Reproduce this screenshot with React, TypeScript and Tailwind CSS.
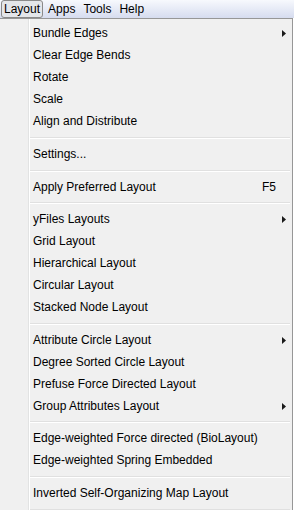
import React from "react";

type Item = { label: string; sub?: boolean; shortcut?: string } | { sep: "a" | "b" };

const items: Item[] = [
  { label: "Bundle Edges", sub: true },
  { label: "Clear Edge Bends" },
  { label: "Rotate" },
  { label: "Scale" },
  { label: "Align and Distribute" },
  { sep: "b" },
  { label: "Settings..." },
  { sep: "b" },
  { label: "Apply Preferred Layout", shortcut: "F5" },
  { sep: "a" },
  { label: "yFiles Layouts", sub: true },
  { label: "Grid Layout" },
  { label: "Hierarchical Layout" },
  { label: "Circular Layout" },
  { label: "Stacked Node Layout" },
  { sep: "b" },
  { label: "Attribute Circle Layout", sub: true },
  { label: "Degree Sorted Circle Layout" },
  { label: "Prefuse Force Directed Layout" },
  { label: "Group Attributes Layout", sub: true },
  { sep: "a" },
  { label: "Edge-weighted Force directed (BioLayout)" },
  { label: "Edge-weighted Spring Embedded" },
  { sep: "b" },
  { label: "Inverted Self-Organizing Map Layout" },
  { sep: "b" },
];

function Arrow() {
  return (
    <svg width="4" height="7" viewBox="0 0 4 7" className="block">
      <path d="M0 0 L4 3.5 L0 7 Z" fill="#1a1a1a" />
    </svg>
  );
}

export default function App() {
  return (
    <div
      className="w-[294px] h-[510px] overflow-hidden bg-white text-black"
      style={{ fontFamily: '"Liberation Sans", Arial, sans-serif' }}
    >
      <div className="h-[18px] flex items-center text-[12px] bg-gradient-to-b from-[#f7f9fd] to-[#d6dcef]">
        <div className="h-[18px] ml-[1px] px-[2px] flex items-center border border-[#8a8a8a] rounded-[3px] bg-[#e4e6ea]">
          Layout
        </div>
        <div className="ml-[5px]">Apps</div>
        <div className="ml-[8px]">Tools</div>
        <div className="ml-[8px]">Help</div>
      </div>
      <div className="w-[293px] h-[492px] border-r border-t border-[#979797] bg-[#f0f0f0] relative pt-[3px] text-[12px]">
        <div className="absolute left-[28px] top-0 bottom-0 w-[1px] bg-[#e2e3e3]" />
        <div className="absolute left-[29px] top-0 bottom-0 w-[1px] bg-white" />
        {items.map((it, i) =>
          "sep" in it ? (
            <div
              key={i}
              className={
                (it.sep === "a" ? "h-[10px]" : "h-[11px]") +
                " flex flex-col justify-center pl-[30px] pr-[2px]"
              }
            >
              <div className="h-[1px] bg-[#e0e0e0]" />
              <div className="h-[1px] bg-white" />
            </div>
          ) : (
            <div key={i} className="h-[22px] flex items-center pl-[33px] pr-[4px]">
              <span className="flex-1 whitespace-nowrap">{it.label}</span>
              {it.shortcut && <span className="mr-[12px]">{it.shortcut}</span>}
              {it.sub && (
                <span className="mr-[2px]">
                  <Arrow />
                </span>
              )}
            </div>
          )
        )}
      </div>
    </div>
  );
}
